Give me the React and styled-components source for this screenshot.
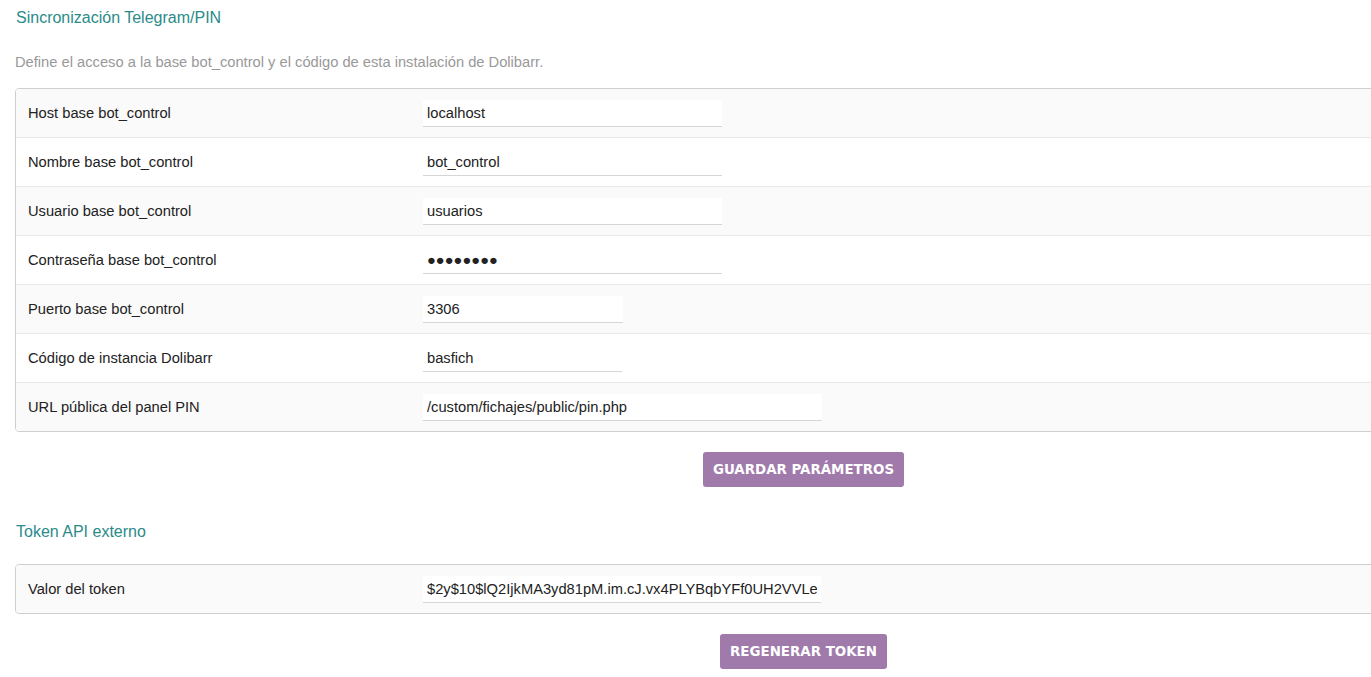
import React from "react";
import styled, { createGlobalStyle } from "styled-components";

const GlobalStyle = createGlobalStyle`
  html, body {
    margin: 0;
    padding: 0;
    background: #fff;
    overflow: hidden;
  }
  body {
    font-family: "Liberation Sans", Arial, sans-serif;
    color: #222;
  }
`;

const Page = styled.div`
  width: 1577px;
  padding: 8px 0 0 15px;
`;

const SectionTitle = styled.div`
  font-size: 16px;
  line-height: 19px;
  color: #2a8b8a;
  padding-left: 1px;
  margin-bottom: ${p => p.gap}px;
`;

const Description = styled.div`
  font-size: 14.7px;
  line-height: 18px;
  color: #999;
  margin-bottom: 17px;
`;

const Table = styled.div`
  border: 1px solid #cfcfcf;
  border-radius: 4px;
  overflow: hidden;
`;

const Row = styled.div`
  display: grid;
  grid-template-columns: 399px 1fr;
  align-items: center;
  height: 48px;
  background: ${p => (p.odd ? "#fafafa" : "#fff")};
  border-top: ${p => (p.first ? "none" : "1px solid #e8e8e8")};
`;

const Label = styled.div`
  font-size: 14.7px;
  line-height: 17px;
  padding-left: 12px;
  padding-top: 1px;
`;

const Input = styled.input`
  box-sizing: border-box;
  width: ${p => p.w}px;
  height: 27px;
  margin-left: 8px;
  padding: 0 4px;
  border: none;
  border-bottom: 1px solid #d6d6d6;
  background: #fff;
  font-family: "Liberation Sans", Arial, sans-serif;
  font-size: 14.7px;
  color: #222;
  outline: none;
`;

const ButtonBar = styled.div`
  display: flex;
  justify-content: center;
  padding: ${p => p.top}px 0 ${p => p.bottom}px;
`;

const Button = styled.button`
  height: 35px;
  padding: 0 10px;
  border: none;
  border-radius: 3px;
  background: #a07aab;
  color: #fff;
  font-family: "DejaVu Sans", Verdana, sans-serif;
  font-weight: bold;
  font-size: 13.4px;
  text-transform: uppercase;
`;

const fields = [
  { label: "Host base bot_control", value: "localhost", w: 299 },
  { label: "Nombre base bot_control", value: "bot_control", w: 299 },
  { label: "Usuario base bot_control", value: "usuarios", w: 299 },
  { label: "Contraseña base bot_control", value: "●●●●●●●●", w: 299 },
  { label: "Puerto base bot_control", value: "3306", w: 200 },
  { label: "Código de instancia Dolibarr", value: "basfich", w: 199 },
  { label: "URL pública del panel PIN", value: "/custom/fichajes/public/pin.php", w: 399 }
];

export default function App() {
  return (
    <Page>
      <GlobalStyle />
      <SectionTitle gap={26}>Sincronización Telegram/PIN</SectionTitle>
      <Description>
        Define el acceso a la base bot_control y el código de esta instalación de Dolibarr.
      </Description>
      <Table>
        {fields.map((f, i) => (
          <Row key={f.label} odd={i % 2 === 0} first={i === 0}>
            <Label>{f.label}</Label>
            <div>
              <Input w={f.w} type="text" defaultValue={f.value} />
            </div>
          </Row>
        ))}
      </Table>
      <ButtonBar top={20} bottom={35}>
        <Button>Guardar parámetros</Button>
      </ButtonBar>
      <SectionTitle gap={23}>Token API externo</SectionTitle>
      <Table>
        <Row odd first>
          <Label>Valor del token</Label>
          <div>
            <Input w={398} defaultValue="$2y$10$lQ2IjkMA3yd81pM.im.cJ.vx4PLYBqbYFf0UH2VVLe" />
          </div>
        </Row>
      </Table>
      <ButtonBar top={20} bottom={0}>
        <Button>Regenerar token</Button>
      </ButtonBar>
    </Page>
  );
}
